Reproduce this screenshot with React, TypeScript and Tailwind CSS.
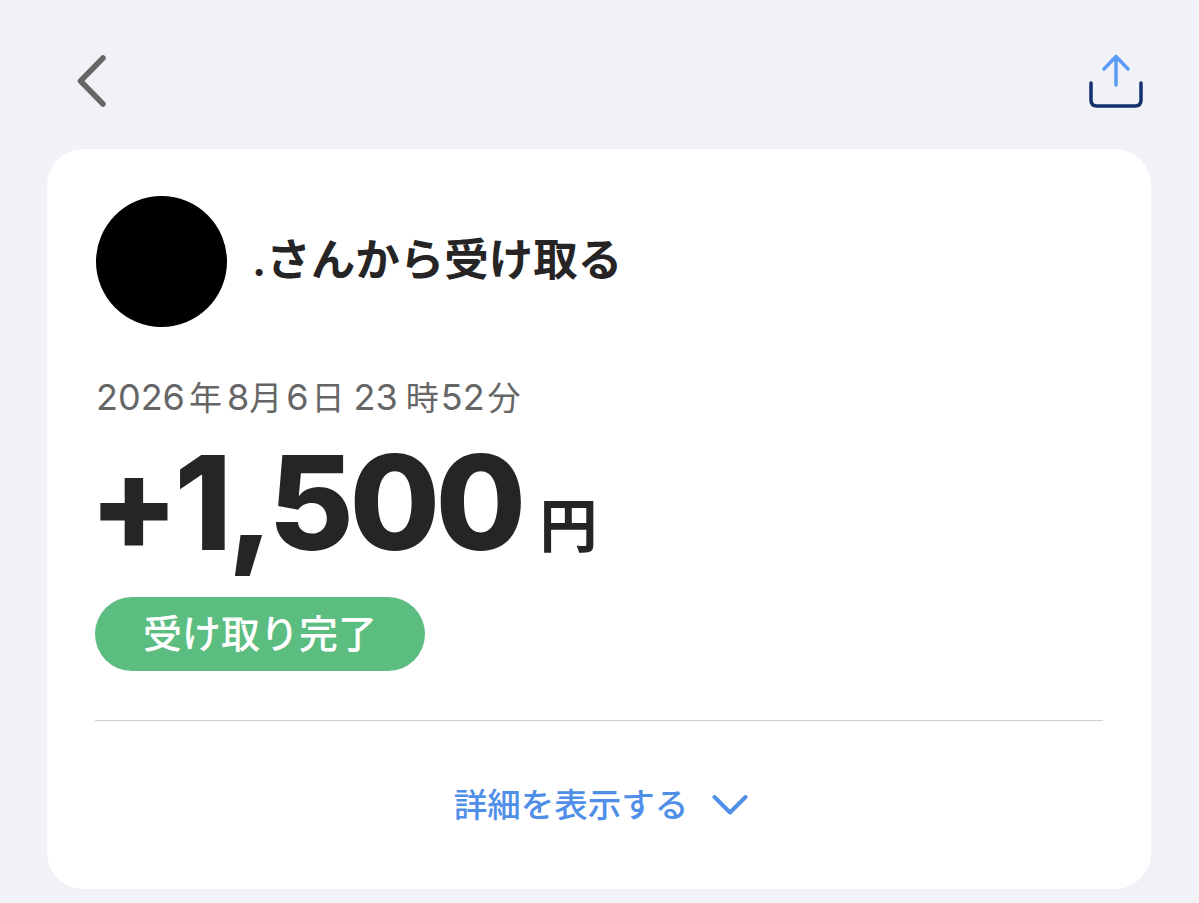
export default function App() {
  return (
    <div className="h-[903px] w-[1199px] overflow-hidden bg-[#f0f2f7] px-[47px] font-['Inter','Noto_Sans_CJK_JP',sans-serif]">
      {/* Header */}
      <div className="flex h-[149px] items-start justify-between pl-[29px] pr-[8px] pt-[53px]">
        <svg width="32" height="58" viewBox="0 0 32 58" fill="none" aria-hidden="true">
          <path d="M27 5 L4.5 28 L27 51" stroke="#666666" strokeWidth="5.5" strokeLinecap="round" strokeLinejoin="round" />
        </svg>
        <svg width="56" height="56" viewBox="0 0 56 56" fill="none" aria-hidden="true">
          <path d="M28 32 V3.5 M16 16 L28 3.5 L40 16" stroke="#5b9bf5" strokeWidth="3.5" strokeLinecap="round" strokeLinejoin="round" />
          <path d="M3 30 V47 Q3 53 9 53 H47 Q53 53 53 47 V30" stroke="#14306f" strokeWidth="3.5" strokeLinecap="round" />
        </svg>
      </div>

      {/* Card */}
      <div className="h-[740px] w-[1104px] rounded-[36px] bg-white px-[48px] pt-[47px]">
        <div className="flex items-center gap-[25px] pl-[1px]">
          <div className="h-[131px] w-[131px] rounded-full bg-black" />
          <div className="-mt-[2px] text-[44.5px] font-semibold leading-none text-[#262425]">.さんから受け取る</div>
        </div>

        <div className="mt-[52px] whitespace-nowrap pl-[1px] text-[33px] leading-[36px] text-[#666666]">
          <span className="text-[36px]">2026</span>
          <span className="ml-[4px]">年</span>
          <span className="ml-[5px] text-[36px]">8</span>
          <span>月</span>
          <span className="ml-[4px] text-[36px]">6</span>
          <span className="ml-[3px]">日</span>
          <span className="ml-[9px] text-[36px]">23</span>
          <span className="ml-[8px]">時</span>
          <span className="ml-[2px] text-[36px]">52</span>
          <span className="ml-[3px]">分</span>
        </div>

        <div className="mt-[22px] flex items-baseline text-[#262425]">
          <span className="-ml-[6px] text-[131px] font-extrabold leading-[130px] tracking-[-0.035em]">+1,500</span>
          <span className="relative -top-[3px] ml-[18px] text-[58px] font-semibold leading-none">円</span>
        </div>

        <div className="mt-[29px] flex h-[74px] w-[330px] items-center justify-center rounded-full bg-[#5cbd80] text-[39px] font-medium text-white">
          受け取り完了
        </div>

        <div className="mt-[49px] h-px bg-[#cfcfcf]" />

        <div className="mt-[64px] flex items-center justify-center gap-[24px] pl-[4px] text-[#4f8fe8]">
          <span className="text-[33.5px] font-medium leading-[40px]">詳細を表示する</span>
          <svg width="36" height="22" viewBox="0 0 36 22" fill="none" aria-hidden="true">
            <path d="M2.5 3 L18 18.5 L33.5 3" stroke="#4f8fe8" strokeWidth="4" strokeLinecap="round" strokeLinejoin="round" />
          </svg>
        </div>
      </div>
    </div>
  );
}
